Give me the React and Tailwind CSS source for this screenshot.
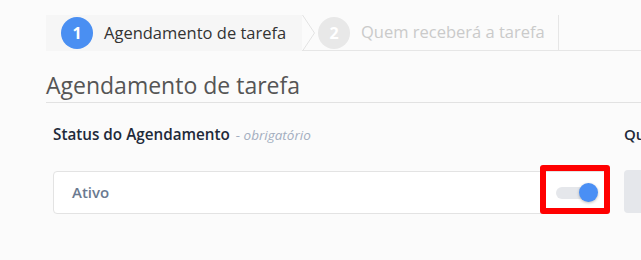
export default function App() {
  return (
    <div className="relative w-[641px] h-[260px] overflow-hidden bg-[#fbfbfb] pl-[46px] pt-[15px] font-['Open_Sans',sans-serif]">
      {/* steps */}
      <div className="flex h-[36px]">
        <div className="flex items-center w-[256px] bg-[#f6f6f6] pl-[15px]">
          <span className="flex items-center justify-center w-[32px] h-[32px] rounded-full bg-[#4a8ff2] text-white text-[16px] font-bold">1</span>
          <span className="ml-[11px] text-[16.5px] text-[#333]">Agendamento de tarefa</span>
        </div>
        <div className="flex-1 flex border-b border-[#e6e6e6]">
          <div className="relative flex items-center w-[257px] border-r border-[#e6e6e6] pl-[16px]">
            <svg className="absolute left-0 top-0" width="14" height="36" viewBox="0 0 14 36">
              <path d="M0.5 0 L12.5 18 L0.5 36" fill="none" stroke="#e3e3e3" strokeWidth="1" />
            </svg>
            <span className="flex items-center justify-center w-[32px] h-[32px] rounded-full bg-[#e8e8e8] text-white text-[16px] font-bold">2</span>
            <span className="ml-[11px] text-[16.5px] text-[#cacaca]">Quem receberá a tarefa</span>
          </div>
        </div>
      </div>

      {/* title */}
      <h2 className="mt-[19px] text-[23px] leading-[30px] text-[#555] pb-[2px] border-b border-[#e2e2e2]">Agendamento de tarefa</h2>

      {/* form */}
      <div className="flex gap-[17px] pl-[7px] mt-[21px]">
        <div className="w-[554px] shrink-0">
          <div className="text-[15.25px] leading-[20px] whitespace-nowrap">
            <span className="font-semibold text-[#1f2a3a]">Status do Agendamento</span>
            <span className="ml-[6px] text-[13.5px] italic text-[#a3aec0]">- obrigatório</span>
          </div>
          <div className="mt-[26px] h-[43px] flex items-center justify-between rounded-[4px] border border-[#e3e3e3] bg-white pl-[18px] pr-[8px]">
            <span className="text-[15px] font-semibold text-[#6b7a90]">Ativo</span>
            <div className="relative w-[41px] h-[12px] rounded-full bg-[#e5e7eb] mr-[1px]">
              <span className="absolute right-[-1px] top-[-4px] w-[19px] h-[19px] rounded-full bg-[#4a8ff5] shadow-[0_1px_3px_rgba(0,0,0,0.25)]" />
            </div>
          </div>
        </div>
        <div className="w-[200px] shrink-0">
          <div className="text-[15px] leading-[20px] font-semibold text-[#1f2a3a] whitespace-nowrap">Quantidade de repetições</div>
          <div className="mt-[26px] h-[43px] rounded-[4px] bg-[#e5e7eb]" />
        </div>
      </div>

      {/* highlight annotation */}
      <div className="absolute left-[540px] top-[165px] w-[70px] h-[49px] rounded-[3px] border-[6px] border-[#ff0000]" />
    </div>
  );
}
